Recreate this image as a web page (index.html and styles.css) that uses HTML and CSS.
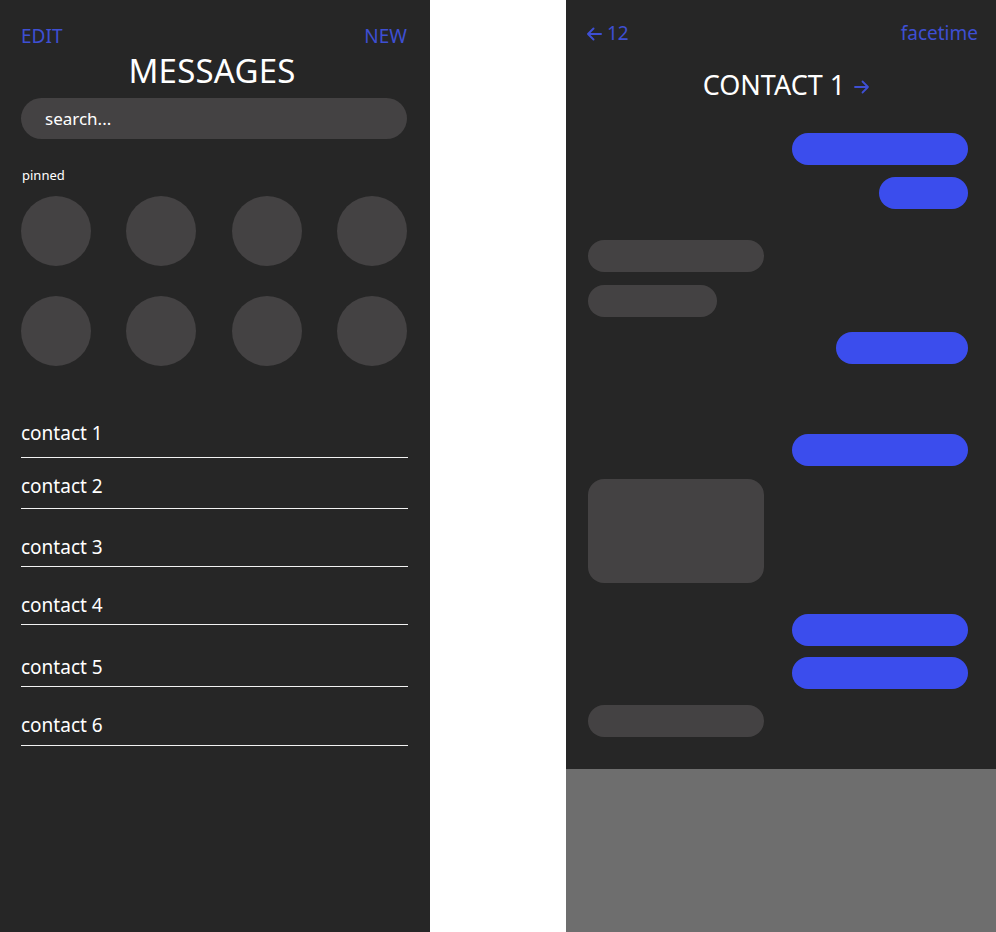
FILE: index.html
```html
<!DOCTYPE html>
<html lang="en">
<head>
<meta charset="utf-8">
<title>Messages</title>
<link rel="stylesheet" href="styles.css">
</head>
<body>
<div class="page">
  <section class="panel list-panel">
    <header class="top-row">
      <span class="link">EDIT</span>
      <span class="link">NEW</span>
    </header>
    <h1 class="title">MESSAGES</h1>
    <div class="search">search...</div>
    <div class="pinned-label">pinned</div>
    <div class="pins">
      <span class="pin"></span><span class="pin"></span><span class="pin"></span><span class="pin"></span>
      <span class="pin"></span><span class="pin"></span><span class="pin"></span><span class="pin"></span>
    </div>
    <ul class="contacts">
      <li class="contact">contact 1</li>
      <li class="contact">contact 2</li>
      <li class="contact">contact 3</li>
      <li class="contact">contact 4</li>
      <li class="contact">contact 5</li>
      <li class="contact">contact 6</li>
    </ul>
  </section>

  <section class="panel chat-panel">
    <div class="chat">
      <header class="top-row chat-top">
        <span class="link back">
          <svg class="arrow" width="16" height="14" viewBox="0 0 16 14" aria-hidden="true"><path d="M15 7H2M7.5 1.5L2 7l5.5 5.5" fill="none" stroke="currentColor" stroke-width="2" stroke-linecap="round" stroke-linejoin="round"/></svg>
          <span>12</span>
        </span>
        <span class="link">facetime</span>
      </header>
      <h2 class="contact-title">CONTACT 1<svg class="title-arrow" width="16" height="14" viewBox="0 0 16 14" aria-hidden="true"><path d="M1 7h13M8.5 1.5L14 7l-5.5 5.5" fill="none" stroke="currentColor" stroke-width="1.8" stroke-linecap="round" stroke-linejoin="round"/></svg></h2>
      <div class="thread">
        <div class="bubble out" style="width:176px"></div>
        <div class="bubble out near" style="width:89px"></div>
        <div class="bubble in far" style="width:176px"></div>
        <div class="bubble in close" style="width:129px"></div>
        <div class="bubble out mid" style="width:132px"></div>
        <div class="bubble out huge" style="width:176px"></div>
        <div class="bubble in close media" style="width:176px"></div>
        <div class="bubble out far" style="width:176px"></div>
        <div class="bubble out tight" style="width:176px"></div>
        <div class="bubble in wide" style="width:176px"></div>
      </div>
    </div>
    <div class="keyboard"></div>
  </section>
</div>
</body>
</html>
```

FILE: styles.css
```css
* { box-sizing: border-box; }

html, body {
  margin: 0;
  padding: 0;
  background: #ffffff;
}

body {
  font-family: "Noto Sans", "Open Sans", sans-serif;
  color: #ffffff;
}

.page {
  display: flex;
  justify-content: space-between;
  width: 996px;
  height: 932px;
}

.panel {
  width: 430px;
  height: 932px;
  background: #262626;
}

/* ---------- list panel ---------- */
.list-panel {
  padding: 25px 23px 0 21px;
}

.top-row {
  display: flex;
  justify-content: space-between;
  align-items: center;
  height: 23px;
}

.link {
  color: #3e4fd3;
  font-size: 19px;
  line-height: 23px;
}

.title {
  margin: 3px 0 0;
  padding-right: 4px;
  text-align: center;
  font-size: 33px;
  font-weight: 400;
  line-height: 40px;
  letter-spacing: 0.2px;
}

.search {
  margin-top: 7px;
  height: 41px;
  border-radius: 21px;
  background: #444243;
  padding-left: 24px;
  font-size: 17px;
  line-height: 41px;
  width: 386px;
}

.pinned-label {
  margin-top: 28px;
  padding-left: 1px;
  font-size: 13px;
  line-height: 16px;
}

.pins {
  margin-top: 13px;
  width: 386px;
  display: grid;
  grid-template-columns: repeat(4, 70px);
  justify-content: space-between;
  row-gap: 30px;
}

.pin {
  width: 70px;
  height: 70px;
  border-radius: 50%;
  background: #444243;
}

.contacts {
  list-style: none;
  margin: 56px 0 0;
  padding: 0;
  width: 387px;
}

.contact {
  font-size: 19px;
  line-height: 23px;
  padding-bottom: 12px;
  border-bottom: 1px solid #f2f2f2;
}

.contact:nth-child(2) { padding-top: 17px; padding-bottom: 10px; }
.contact:nth-child(3) { padding-top: 27px; padding-bottom: 7px; }
.contact:nth-child(4) { padding-top: 27px; padding-bottom: 7px; }
.contact:nth-child(5) { padding-top: 31px; padding-bottom: 7px; }
.contact:nth-child(6) { padding-top: 27px; padding-bottom: 8px; }

/* ---------- chat panel ---------- */
.chat-panel {
  display: flex;
  flex-direction: column;
}

.chat {
  height: 769px;
  padding: 22px 18px 0 20px;
}

.chat-top {
  height: 23px;
}

.back {
  display: inline-flex;
  align-items: center;
  gap: 5px;
}

.back .arrow {
  margin-top: 1px;
}

.contact-title {
  margin: 23px 0 0;
  padding-left: 9px;
  text-align: center;
  font-size: 27px;
  font-weight: 400;
  line-height: 34px;
}

.title-arrow {
  color: #3e4fd3;
  vertical-align: 1px;
  margin-left: 9px;
}

.thread {
  display: flex;
  flex-direction: column;
  margin-top: 31px;
  padding: 0 10px 0 2px;
}

.bubble {
  height: 32px;
  border-radius: 16px;
  flex: none;
}

.bubble.out {
  align-self: flex-end;
  background: #3b4ded;
}

.bubble.in {
  align-self: flex-start;
  background: #444243;
}

.bubble.tight { margin-top: 11px; }
.bubble.near { margin-top: 12px; }
.bubble.close { margin-top: 13px; }
.bubble.mid { margin-top: 15px; }
.bubble.wide { margin-top: 16px; }
.bubble.far { margin-top: 31px; }
.bubble.huge { margin-top: 70px; }

.bubble.media {
  height: 104px;
  border-radius: 16px;
}

.keyboard {
  flex: 1;
  background: #6e6e6e;
}
```
